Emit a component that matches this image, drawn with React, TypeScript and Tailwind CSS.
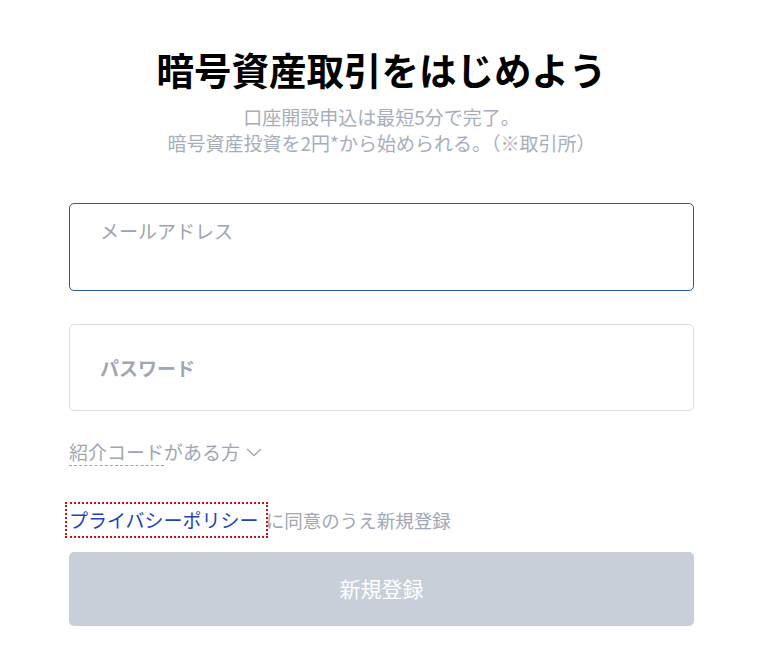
import { useState } from "react";

const font = { fontFamily: '"Noto Sans CJK JP", "Noto Sans", sans-serif' };

const App = () => {
  const [email, setEmail] = useState("");
  const [password, setPassword] = useState("");

  return (
    <div className="min-h-screen bg-white" style={font}>
      <div className="ml-[69px] w-[625px] pt-[43px]">
        <h1 className="text-center text-[37.5px] font-bold leading-[52px] text-black">
          暗号資産取引をはじめよう
        </h1>
        <p className="mt-[9px] text-center text-[19px] leading-[26px] text-[#a7aebb]">
          口座開設申込は最短5分で完了。
          <br />
          暗号資産投資を2円*から始められる。（※取引所）
        </p>

        {/* Email */}
        <div className="mt-[47px] h-[88px] rounded-[5px] border border-[#2f54b4] px-[30px] pt-[13px]">
          <input
            type="email"
            value={email}
            onChange={(e) => setEmail(e.target.value)}
            placeholder="メールアドレス"
            className="w-full bg-transparent text-[19px] leading-[28px] text-gray-800 outline-none placeholder:text-[#9ea5b1]"
          />
        </div>

        {/* Password */}
        <div className="mt-[33px] flex h-[87px] items-center rounded-[5px] border border-[#dcdfe3] px-[30px]">
          <input
            type="password"
            value={password}
            onChange={(e) => setPassword(e.target.value)}
            placeholder="パスワード"
            className="w-full bg-transparent text-[19px] font-bold leading-[28px] text-gray-800 outline-none placeholder:text-[#a0a7b3]"
          />
        </div>

        {/* Referral */}
        <button className="mt-[27px] flex items-center gap-[6px] text-[19px] leading-[28px] text-[#a0a7b3]">
          <span>
            <span className="border-b border-dashed border-[#9ea5b1]">紹介コード</span>
            がある方
          </span>
          <svg width="16" height="9" viewBox="0 0 16 9" fill="none" className="mt-[1px]">
            <polyline points="1,1 8,7.5 15,1" stroke="#a0a7b3" strokeWidth="1.3" />
          </svg>
        </button>

        {/* Agreement */}
        <p className="mt-[40px] text-[18.5px] leading-[28px] text-[#a0a7b3]">
          <a
            href="#"
            className="inline-block pr-[5px] text-[19px] leading-[28px] text-[#1f42b5] outline-2 outline-offset-2 outline-dotted outline-[#c81010]"
          >
            プライバシーポリシー
          </a>
          <span className="ml-[2px]">に同意のうえ新規登録</span>
        </p>

        <button
          disabled
          className="mt-[18px] h-[74px] w-full rounded-[5px] bg-[#c8cfd8] text-[21px] text-white"
        >
          新規登録
        </button>
      </div>
    </div>
  );
};

export default App;
